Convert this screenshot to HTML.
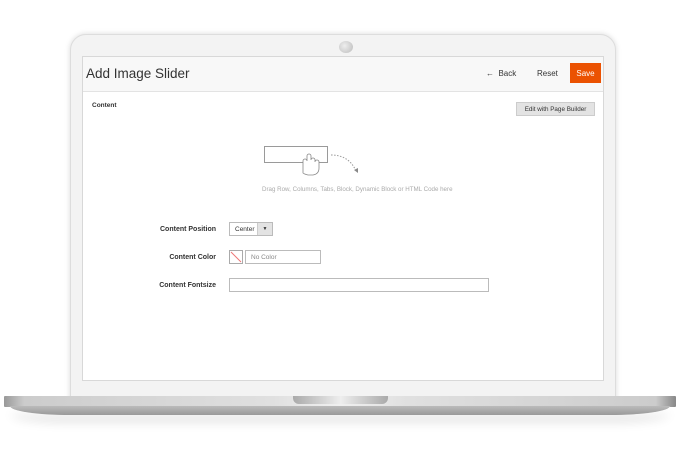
<!DOCTYPE html>
<html><head><style>
body{margin:0;width:680px;height:450px;background:#fff;position:relative;overflow:hidden;font-family:"Liberation Sans",sans-serif}
.a{position:absolute}
.lbl{font-size:7px;font-weight:bold;color:#333;text-align:right;width:140px;left:76px}
</style></head><body>
<div class="a" style="left:70px;top:34px;width:544px;height:368px;background:#f3f3f3;border-radius:16px 16px 0 0;box-shadow:0 0 6px rgba(0,0,0,.15);border:1px solid #ddd"></div>
<div class="a" style="left:339px;top:41px;width:14px;height:12px;border-radius:50%;background:radial-gradient(circle at 40% 40%,#eee,#bbb)"></div>
<div class="a" style="left:82px;top:56px;width:522px;height:325px;background:#fff;border:1px solid #d8d8d8;box-sizing:border-box"></div>
<div class="a" style="left:83px;top:57px;width:520px;height:34px;background:#f8f8f8;border-bottom:1px solid #e3e3e3"></div>
<div class="a" style="left:86px;top:66px;font-size:13.5px;color:#333">Add Image Slider</div>
<div class="a" style="left:486px;top:69px;font-size:8px;color:#333">&#8592;&nbsp; Back</div>
<div class="a" style="left:537px;top:69px;font-size:8px;color:#333">Reset</div>
<div class="a" style="left:570px;top:63px;width:31px;height:20px;background:#eb5202;color:#fff;font-size:8px;line-height:21px;text-align:center">Save</div>
<div class="a" style="left:92px;top:102px;font-size:6.5px;font-weight:bold;color:#333">Content</div>
<div class="a" style="left:516px;top:102px;width:79px;height:14px;background:#e3e3e3;border:1px solid #ccc;box-sizing:border-box;font-size:6.3px;color:#333;line-height:13px;text-align:center">Edit with Page Builder</div>
<svg class="a" style="left:262px;top:144px" width="100" height="36"><rect x="2.5" y="2.5" width="63" height="16" fill="#fff" stroke="#9a9a9a"/><path d="M41 29 v-12 a2 2 0 0 1 4 0 v-5 a2 2 0 0 1 4 0 v4 a2 2 0 0 1 4 0 v2 a2 2 0 0 1 4 0 v6 q0 6 -6 7 h-5 q-4 -1 -5 -2z" fill="#fff" stroke="#888" stroke-width=".8"/><path d="M69 11 q18 0 25 16" fill="none" stroke="#999" stroke-dasharray="1.5 1.5"/><path d="M92 26 l4 3 l0 -5z" fill="#888"/></svg>
<div class="a" style="left:262px;top:186px;font-size:6.2px;color:#aaa">Drag Row, Columns, Tabs, Block, Dynamic Block or HTML Code here</div>
<div class="a lbl" style="top:226px">Content Position</div>
<div class="a" style="left:229px;top:222px;width:44px;height:14px;border:1px solid #bbb;box-sizing:border-box;font-size:6.5px;line-height:13px;color:#333"><span style="margin-left:5px">Center</span><span style="position:absolute;right:0;top:0;width:14px;height:12px;background:#e3e3e3;border-left:1px solid #ccc;text-align:center;font-size:5px">&#9660;</span></div>
<div class="a lbl" style="top:254px">Content Color</div>
<svg class="a" style="left:229px;top:250px" width="14" height="14"><rect x=".5" y=".5" width="13" height="13" fill="#fff" stroke="#aaa"/><line x1="2" y1="2" x2="12" y2="12" stroke="#e77"/></svg>
<div class="a" style="left:245px;top:250px;width:76px;height:14px;border:1px solid #bbb;box-sizing:border-box;font-size:6.5px;line-height:13px;color:#888;padding-left:5px">No Color</div>
<div class="a lbl" style="top:282px">Content Fontsize</div>
<div class="a" style="left:229px;top:278px;width:260px;height:14px;border:1px solid #bbb;box-sizing:border-box"></div>
<div class="a" style="left:4px;top:396px;width:672px;height:11px;background:linear-gradient(90deg,#999,#ccc 3%,#e0e0e0 40%,#f0f0f0 50%,#e0e0e0 60%,#ccc 97%,#888);border-radius:1px"></div>
<div class="a" style="left:10px;top:406px;width:660px;height:9px;background:linear-gradient(#bbb,#999);border-radius:0 0 60px 60px / 0 0 9px 9px;box-shadow:0 8px 10px rgba(0,0,0,.1)"></div>
<div class="a" style="left:293px;top:396px;width:95px;height:8px;background:linear-gradient(90deg,#aaa,#eee 50%,#aaa);border-radius:0 0 6px 6px"></div>
</body></html>
